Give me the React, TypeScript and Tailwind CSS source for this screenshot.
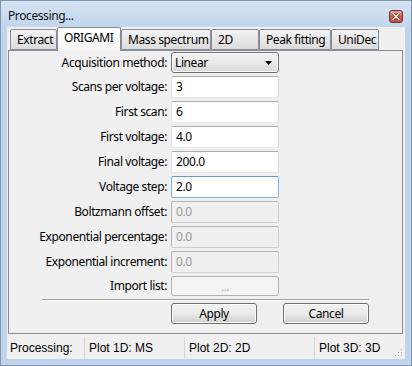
import React from "react";

const font = { fontFamily: '"Noto Sans", "Open Sans", sans-serif', letterSpacing: "-0.4px" };

function Tab({ label, w, selected }: { label: string; w: number; selected?: boolean }) {
  if (selected) {
    return (
      <div
        className="relative z-10 h-[24px] -mb-px border border-b-0 border-[#898c95] rounded-t-[2px] bg-gradient-to-b from-[#ffffff] to-[#f4f4f4] flex items-start pt-[2px] pl-[6px] text-[12px] text-black leading-[16px] whitespace-nowrap overflow-hidden"
        style={{ width: w }}
      >
        {label}
      </div>
    );
  }
  return (
    <div
      className="h-[21px] border border-[#898c95] rounded-t-[2px] bg-gradient-to-b from-[#f3f3f3] to-[#dcdcdc] flex items-center pl-[6px] text-[12px] text-black leading-[16px] whitespace-nowrap overflow-hidden"
      style={{ width: w }}
    >
      {label}
    </div>
  );
}

function Label({ children }: { children: React.ReactNode }) {
  return <div className="text-right text-[12px] leading-[16px] text-black whitespace-nowrap">{children}</div>;
}

function Input({ value, focused }: { value: string; focused?: boolean }) {
  return (
    <div
      className={
        "h-[22px] w-[108px] rounded-[2px] bg-white flex items-center pl-[4px] text-[12px] text-black border " +
        (focused
          ? "border-[#7eb4ea] border-t-[#569de5]"
          : "border-[#e3e9ef] border-t-[#abadb3] border-l-[#e2e3ea] border-r-[#dbdfe6]")
      }
    >
      {value}
    </div>
  );
}

function Disabled({ value }: { value: string }) {
  return (
    <div className="h-[22px] w-[108px] rounded-[2px] bg-[#f0f0f0] flex items-center pl-[4px] text-[12px] text-[#9a9a9a] border border-[#b4b4b4] border-b-[#cfcfcf] border-r-[#cfcfcf]">
      {value}
    </div>
  );
}

function Button({ label, w }: { label: string; w: number }) {
  return (
    <div
      className="h-[21px] rounded-[3px] border border-[#707070] bg-gradient-to-b from-[#f2f2f2] via-[#ebebeb] to-[#cfcfcf] flex items-center justify-center text-[12px] text-black shadow-[inset_0_0_0_1px_#fcfcfc]"
      style={{ width: w }}
    >
      {label}
    </div>
  );
}

export default function App() {
  return (
    <div
      className="w-[412px] h-[366px] bg-[#bfd4eb] border border-[#7f95b0] flex flex-col overflow-hidden"
      style={font}
    >
      {/* title bar */}
      <div className="h-[26px] shrink-0 flex items-center pl-[7px] pr-[8px] bg-gradient-to-b from-[#d6e4f3] to-[#c1d5ec]">
        <div className="text-[12px] text-[#111] flex-1 pt-[3px]">Processing...</div>
        <div className="mt-[5px] w-[14px] h-[13px] rounded-[3px] border border-[#7a2f25] bg-gradient-to-b from-[#e6a79a] via-[#cf5b4c] to-[#c24c3a] flex items-center justify-center">
          <svg width="8" height="7" viewBox="0 0 8 7">
            <path d="M1 0.5 L7 6.5 M7 0.5 L1 6.5" stroke="#4a1a14" strokeWidth="2.6" strokeLinecap="square" />
            <path d="M1 0.5 L7 6.5 M7 0.5 L1 6.5" stroke="#ffffff" strokeWidth="1.4" strokeLinecap="square" />
          </svg>
        </div>
      </div>

      {/* client */}
      <div className="mx-[6px] w-[398px] h-[332px] bg-[#f0f0f0] flex flex-col shrink-0">
        {/* tabs */}
        <div className="flex items-end pl-[3px] h-[23px] pt-0">
          <Tab label="Extract" w={47} />
          <Tab label="ORIGAMI" w={64} selected />
          <Tab label="Mass spectrum" w={90} />
          <Tab label="2D" w={48} />
          <Tab label="Peak fitting" w={72} />
          <Tab label="UniDec" w={48} />
        </div>
        {/* panel */}
        <div className="ml-[1px] w-[395px] h-[284px] border border-[#898c95] bg-[#f0f0f0] pt-px flex flex-col">
          <div className="grid grid-cols-[158px_108px] gap-x-[4px] gap-y-[3px] items-center">
            <Label>Acquisition method:</Label>
            <div className="h-[21px] w-[108px] rounded-[3px] border border-[#707070] bg-gradient-to-b from-[#f2f2f2] via-[#ebebeb] to-[#d8d8d8] flex items-center pl-[3px] pr-[6px] text-[12px] text-black shadow-[inset_0_0_0_1px_#fcfcfc]">
              <span className="flex-1">Linear</span>
              <svg width="7" height="4" viewBox="0 0 7 4">
                <path d="M0 0 H7 L3.5 4 Z" fill="#000" />
              </svg>
            </div>
            <Label>Scans per voltage:</Label>
            <Input value="3" />
            <Label>First scan:</Label>
            <Input value="6" />
            <Label>First voltage:</Label>
            <Input value="4.0" />
            <Label>Final voltage:</Label>
            <Input value="200.0" />
            <Label>Voltage step:</Label>
            <Input value="2.0" focused />
            <Label>Boltzmann offset:</Label>
            <Disabled value="0.0" />
            <Label>Exponential percentage:</Label>
            <Disabled value="0.0" />
            <Label>Exponential increment:</Label>
            <Disabled value="0.0" />
            <Label>Import list:</Label>
            <div className="h-[20px] w-[108px] rounded-[3px] border border-[#adb2b5] bg-[#f4f4f4] flex items-center justify-center text-[11px] text-[#a0a0a0] leading-none">
              ...
            </div>
          </div>
          <div className="mt-[3px] ml-[33px] w-[327px] h-[2px] border-t border-[#a0a0a0] border-b border-b-white" />
          <div className="flex mt-[2px] ml-[162px] gap-[26px]">
            <Button label="Apply" w={86} />
            <Button label="Cancel" w={86} />
          </div>
        </div>
        {/* status bar */}
        <div
          className="mt-[3px] h-[22px] flex items-center text-[12px] text-black bg-[#f0f0f0] relative"
          style={{ fontFamily: '"Liberation Sans", Arial, sans-serif', letterSpacing: "0px" }}
        >
          <div className="w-[78px] pl-[3px] border-r border-[#d7d7d7] h-full flex items-center">Processing:</div>
          <div className="w-[100px] pl-[4px] border-r border-[#d7d7d7] h-full flex items-center">Plot 1D: MS</div>
          <div className="w-[130px] pl-[4px] border-r border-[#d7d7d7] h-full flex items-center">Plot 2D: 2D</div>
          <div className="flex-1 pl-[4px] h-full flex items-center">Plot 3D: 3D</div>
          <svg className="absolute right-[2px] bottom-[2px]" width="10" height="10" viewBox="0 0 10 10">
            <rect x="8" y="2" width="1" height="1" fill="#a8a8a8" />
            <rect x="5" y="5" width="1" height="1" fill="#a8a8a8" />
            <rect x="8" y="5" width="1" height="1" fill="#a8a8a8" />
            <rect x="2" y="8" width="1" height="1" fill="#a8a8a8" />
            <rect x="5" y="8" width="1" height="1" fill="#a8a8a8" />
            <rect x="8" y="8" width="1" height="1" fill="#a8a8a8" />
          </svg>
        </div>
      </div>
    </div>
  );
}
